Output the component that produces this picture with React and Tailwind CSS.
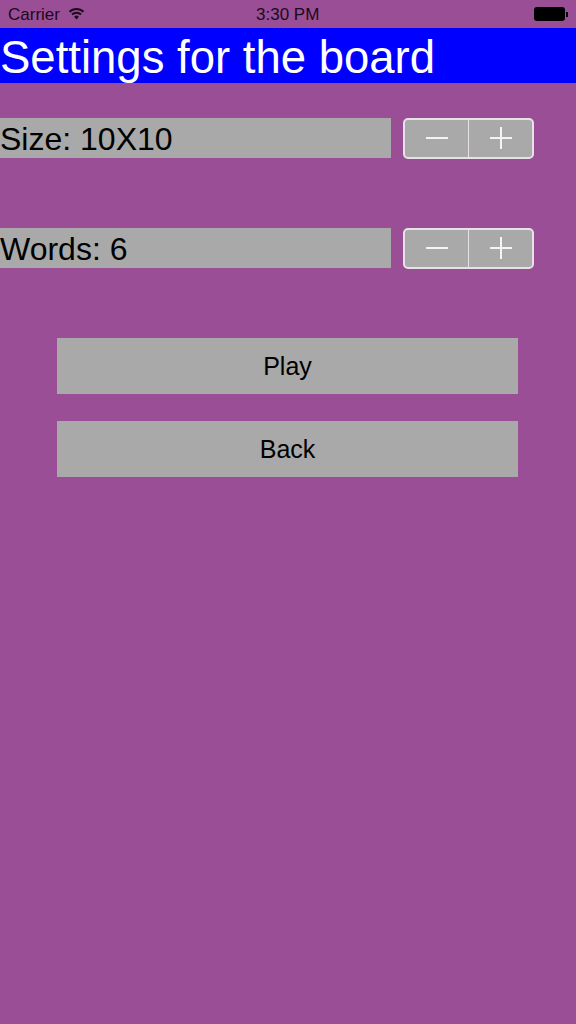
import React from "react";

const StatusBar = () => (
  <div className="relative flex items-center justify-between h-7 pl-2 pr-2 text-[17px] leading-none text-[#1a0a1a]">
    <div className="flex items-center gap-[8px]">
      <span>Carrier</span>
      <svg width="17" height="13" viewBox="0 0 16 13" className="-mt-[1px]">
        <path d="M1 4.8a10 10 0 0 1 14 0" fill="none" stroke="currentColor" strokeWidth="2" />
        <path d="M3.5 7.5a6.4 6.4 0 0 1 9 0" fill="none" stroke="currentColor" strokeWidth="2" />
        <path d="M5.6 9.7a3.4 3.4 0 0 1 4.8 0L8 12.6z" fill="currentColor" />
      </svg>
    </div>
    <span className="absolute left-[256px] top-[6px] font-medium">3:30 PM</span>
    <div className="flex items-center gap-px">
      <div className="w-[31px] h-[14px] rounded-[3px] bg-black" />
      <div className="w-[2px] h-[5px] bg-black" />
    </div>
  </div>
);

const Stepper = () => (
  <div className="flex ml-3 w-[131px] h-[41px] rounded-[5px] border-2 border-[#e6e2e6] bg-[#a9a9a9] text-[#f4f4f4]">
    <button className="flex w-[64px] pb-px items-center justify-center border-r-[1.5px] border-[#e6e2e6]">
      <svg width="22" height="22" viewBox="0 0 22 22">
        <path d="M0 11h22" stroke="currentColor" strokeWidth="2" />
      </svg>
    </button>
    <button className="flex flex-1 pb-px items-center justify-center">
      <svg width="22" height="22" viewBox="0 0 22 22">
        <path d="M0 11h22M11 0v22" stroke="currentColor" strokeWidth="2" />
      </svg>
    </button>
  </div>
);

const SettingRow = ({ label, className }) => (
  <div className={`flex items-start ${className}`}>
    <div className="w-[391px] h-10 bg-[#a9a9a9] text-[32px] leading-[42px] text-black">{label}</div>
    <Stepper />
  </div>
);

const ActionButton = ({ label, className }) => (
  <button className={`block ml-[57px] w-[461px] h-14 pt-px bg-[#a9a9a9] text-[25px] text-black ${className}`}>
    {label}
  </button>
);

export default function App() {
  return (
    <div className="min-h-screen bg-[#9a4e96] font-['Liberation_Sans',Arial,sans-serif]">
      <StatusBar />
      <div className="h-[55px] bg-[#0000ff] text-[45.5px] leading-[60px] text-white">Settings for the board</div>
      <SettingRow label="Size: 10X10" className="mt-[35px]" />
      <SettingRow label="Words: 6" className="mt-[69px]" />
      <ActionButton label="Play" className="mt-[69px]" />
      <ActionButton label="Back" className="mt-[27px]" />
    </div>
  );
}
